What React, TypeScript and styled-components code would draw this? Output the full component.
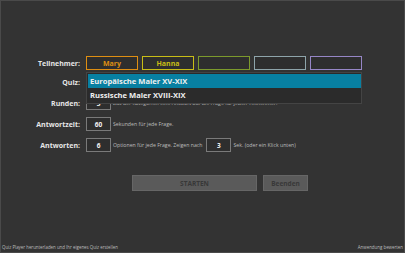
import React from "react";
import styled, { createGlobalStyle } from "styled-components";

const Global = createGlobalStyle`
  html, body { margin: 0; padding: 0; background: #333333; }
  body { font-family: "Open Sans", "Noto Sans", sans-serif; }
  * { box-sizing: border-box; }
`;

const Frame = styled.div`
  width: 405px;
  height: 253px;
  background: #333333;
  border: 1px solid #4a4a4a;
  position: relative;
  display: flex;
  flex-direction: column;
  overflow: hidden;
`;

const Form = styled.div`
  display: flex;
  flex-direction: column;
  padding-top: 55px;
`;

const Row = styled.div<{ $top?: number }>`
  display: flex;
  align-items: center;
  height: 14px;
  margin-top: ${(p) => p.$top ?? 0}px;
`;

const Label = styled.div`
  width: 80px;
  text-align: right;
  padding-right: 1px;
  font-size: 7px;
  font-weight: 700;
  color: #e6e6e6;
  flex-shrink: 0;
`;

const Content = styled.div`
  margin-left: 5px;
  display: flex;
  align-items: center;
  gap: 4px;
  position: relative;
  flex: 1;
  height: 100%;
`;

const Player = styled.div<{ $c: string }>`
  width: 52px;
  height: 14px;
  border: 1.5px solid ${(p) => p.$c};
  background: #2e2e2e;
  color: ${(p) => p.$c};
  font-size: 7px;
  font-weight: 700;
  display: flex;
  align-items: center;
  justify-content: center;
`;

const NumBox = styled.div`
  width: 25px;
  height: 14px;
  border: 1px solid #7a7a7a;
  background: #2e2e2e;
  color: #f2f2f2;
  font-size: 6.5px;
  font-weight: 700;
  display: flex;
  align-items: center;
  justify-content: center;
  flex-shrink: 0;
`;

const Hint = styled.span`
  font-size: 5.2px;
  color: #bdbdbd;
  white-space: nowrap;
  margin-left: -2px;
`;

const DropList = styled.div`
  position: absolute;
  left: 0;
  top: -3px;
  width: 276px;
  background: #2b2b2b;
  border: 1px solid #444444;
  padding: 1px 0 1px 1px;
  z-index: 2;
`;

const Option = styled.div<{ $sel?: boolean }>`
  height: 14px;
  display: flex;
  align-items: center;
  padding-left: 2px;
  font-size: 7.6px;
  font-weight: 700;
  color: #f0f0f0;
  background: ${(p) => (p.$sel ? "#0880a2" : "transparent")};
`;

const Buttons = styled.div`
  display: flex;
  gap: 6px;
  margin-top: 23px;
  margin-left: 131px;
`;

const Btn = styled.div<{ $w: number }>`
  width: ${(p) => p.$w}px;
  height: 16px;
  background: #5a5a5a;
  border: 1px solid #666666;
  color: #383838;
  font-size: 6.5px;
  font-weight: 700;
  display: flex;
  align-items: center;
  justify-content: center;
`;

const Footer = styled.div`
  margin-top: auto;
  display: flex;
  justify-content: space-between;
  padding: 0 1px 2px 1px;
  font-size: 4.4px;
  color: #bdbdbd;
`;

const players = [
  { name: "Mary", c: "#de8e12" },
  { name: "Hanna", c: "#c8bd16" },
  { name: "", c: "#7c9a2c" },
  { name: "", c: "#8ea4aa" },
  { name: "", c: "#9686c6" },
];

export default function App() {
  return (
    <>
      <Global />
      <Frame>
        <Form>
          <Row>
            <Label>Teilnehmer:</Label>
            <Content>
              {players.map((p, i) => (
                <Player key={i} $c={p.c}>
                  {p.name}
                </Player>
              ))}
            </Content>
          </Row>
          <Row $top={5}>
            <Label>Quiz:</Label>
            <Content>
              <DropList>
                <Option $sel>Europäische Maler XV-XIX</Option>
                <Option>Russische Maler XVIII-XIX</Option>
              </DropList>
            </Content>
          </Row>
          <Row $top={7}>
            <Label>Runden:</Label>
            <Content>
              <NumBox>3</NumBox>
              <Hint>aus der Kategorien eine Antwort auf die Frage für jeden Teilnehmer.</Hint>
            </Content>
          </Row>
          <Row $top={7}>
            <Label>Antwortzeit:</Label>
            <Content>
              <NumBox>60</NumBox>
              <Hint>Sekunden für jede Frage.</Hint>
            </Content>
          </Row>
          <Row $top={7}>
            <Label>Antworten:</Label>
            <Content>
              <NumBox>6</NumBox>
              <Hint>Optionen für jede Frage. Zeigen nach</Hint>
              <NumBox>3</NumBox>
              <Hint>Sek. (oder ein Klick unten)</Hint>
            </Content>
          </Row>
        </Form>
        <Buttons>
          <Btn $w={125}>STARTEN</Btn>
          <Btn $w={45}>Beenden</Btn>
        </Buttons>
        <Footer>
          <span>Quiz Player herunterladen und Ihr eigenes Quiz erstellen</span>
          <span>Anwendung bewerten</span>
        </Footer>
      </Frame>
    </>
  );
}
